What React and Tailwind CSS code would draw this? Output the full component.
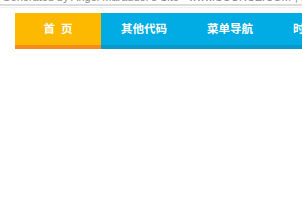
import React from 'react';

const items = ['首 页', '其他代码', '菜单导航', '时尚导航', '联系我们'];

export default function App() {
    return (
        <div className="w-[302px] h-[200px] bg-white overflow-hidden" style={{ fontFamily: '"Noto Sans CJK SC", "Liberation Sans", sans-serif' }}>
            {/* cut-off header text */}
            <div className="h-[3px] overflow-hidden">
                <div className="-mt-[9px] text-[11px] leading-[12px] text-[#888] whitespace-nowrap pl-[2px]" style={{ fontFamily: '"Liberation Sans", sans-serif' }}>
                    Generated by Angel Marauder's Site - www.SOURCE.COM 代码,jQuery,css,js,html
                </div>
            </div>
            <div className="h-[2px] bg-[#dcdcdc] mt-[1px]"></div>
            <div className="h-[1px] bg-[#f0f0f0] mt-[1px]"></div>

            {/* nav */}
            <div className="mt-[5px] ml-[15px] flex bg-[#00ace3] border-b-4 border-[#0a97c9] h-[36px]">
                {items.map((t, i) => (
                    <div
                        key={t}
                        className={`w-[86px] shrink-0 flex items-center justify-center text-white font-bold text-[11.5px] ${i === 0 ? 'bg-[#fcb900] -mb-[4px] border-b-4 border-[#f58d1e]' : ''}`}
                    >
                        {i === 0 ? <span className="tracking-[6px] pl-[6px]">首页</span> : t}
                    </div>
                ))}
            </div>
        </div>
    );
}
